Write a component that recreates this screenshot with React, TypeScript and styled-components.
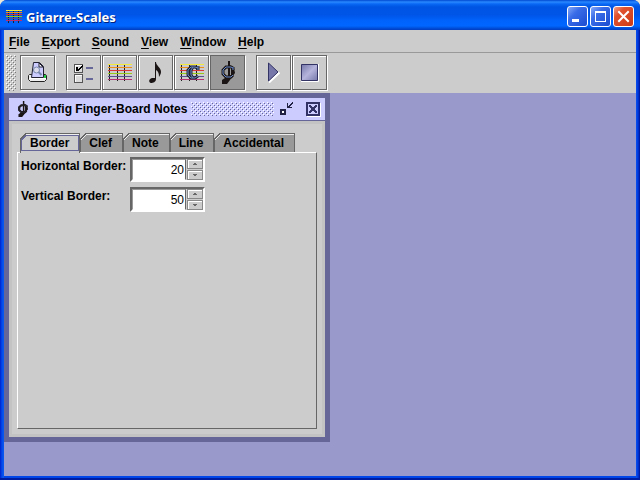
import React, { useState } from "react";
import styled, { createGlobalStyle, css } from "styled-components";

const Global = createGlobalStyle`
  * { box-sizing: border-box; }
  html, body, #root { height: 100%; margin: 0; }
  body { background: #ece9d8; overflow: hidden; }
  body, button, input { font-family: "Liberation Sans", Arial, sans-serif; font-size: 12px; color: #000; }
  button { padding: 0; border: 0; background: none; }
  svg { display: block; }
`;

const AppWindow = styled.div`
  display: flex;
  flex-direction: column;
  min-height: 100vh;
  padding: 0 4px 4px;
  border-radius: 7px 7px 0 0;
  background: linear-gradient(90deg, #001ec8 0, #0038e0 1px, #0855f0 3px, #0855f0 4px, #0046e8 4px,
    #0046e8 calc(100% - 4px), #0a50ee calc(100% - 4px), #0038dc calc(100% - 2px), #001090 100%);
  box-shadow: inset 0 -2px #001ca0;
`;

const TitleBar = styled.header`
  display: flex;
  align-items: center;
  height: 30px;
  margin: 0 -4px;
  padding: 3px 6px 0;
  gap: 4px;
  border-radius: 7px 7px 0 0;
  background: linear-gradient(180deg, #0048d0 0, #2a88ff 2px, #0868f4 4px, #0054e3 7px, #0055e8 15px,
    #0064fc 21px, #0066ff 26px, #0050dc 28px, #003cc0 30px);
`;

const WindowTitle = styled.h1`
  flex: 1;
  margin: 0;
  color: #fff;
  font: bold 13px/16px "Noto Sans", sans-serif;
  text-shadow: 1px 1px #00207c;
`;

const WindowButtons = styled.div`
  display: flex;
  gap: 2px;
`;

const WindowButton = styled.button<{ $close?: boolean }>`
  display: grid;
  place-items: center;
  width: 21px;
  height: 21px;
  border: 1px solid #fff;
  border-radius: 3px;
  background: ${(p) =>
    p.$close
      ? "linear-gradient(135deg, #f0a088 0, #e0512e 30%, #cc3a14 100%)"
      : "linear-gradient(135deg, #84a8f8 0, #3a6ce8 35%, #1c4cd0 100%)"};
`;

const MenuBar = styled.nav`
  display: flex;
  gap: 12px;
  height: 23px;
  padding: 0 5px;
  border-bottom: 1px solid #999;
  background: #ccc;
`;

const MenuItem = styled.button`
  font-weight: bold;
  line-height: 24px;
  &::first-letter { text-decoration: underline; text-underline-offset: 2px; }
`;

const ToolBar = styled.div`
  display: flex;
  height: 40px;
  padding: 2px 2px 0;
  background: #ccc;
`;

const dot = (color: string, place: string) =>
  `conic-gradient(from 270deg at 1px 1px, ${color} 90deg, transparent 0) ${place} / 4px 4px`;

const Grip = styled.div`
  width: 10px;
  height: 36px;
  margin-right: 4px;
  background: ${[
    dot("#fff", "0 0"),
    dot("#fff", "2px 2px"),
    dot("#777", "1px 1px"),
    dot("#777", "3px 3px"),
  ].join(", ")};
`;

const ToolGroup = styled.div`
  display: flex;
  gap: 1px;
  margin-right: 11px;
`;

const ToolButton = styled.button<{ $pressed?: boolean }>`
  display: grid;
  place-items: center;
  width: 35px;
  height: 35px;
  border: 1px solid #666;
  background: ${(p) => (p.$pressed ? "#999" : "#ccc")};
  box-shadow: ${(p) => (p.$pressed ? "1px 1px #fff" : "inset 1px 1px #fff, 1px 1px #fff")};
`;

const Desktop = styled.main`
  display: flex;
  flex: 1;
  align-items: flex-start;
  background: #99c;
`;

const Frame = styled.section`
  display: flex;
  flex-direction: column;
  width: 326px;
  border: 5px solid #669;
  background: #ccc;
`;

const FrameTitle = styled.header`
  display: flex;
  align-items: center;
  height: 23px;
  padding: 0 4px 0 8px;
  border-bottom: 1px solid #669;
  background: #ccf;
`;

const FrameName = styled.h2`
  margin: 0 4px 0 6px;
  font-size: 12px;
  line-height: 22px;
  white-space: nowrap;
`;

const Bumps = styled.div`
  flex: 1;
  height: 14px;
  margin-right: 5px;
  background: ${[
    dot("#fff", "0 0"),
    dot("#fff", "2px 2px"),
    dot("#669", "1px 1px"),
    dot("#669", "3px 3px"),
  ].join(", ")};
`;

const FrameButton = styled.button`
  width: 16px;
  height: 16px;
  & + & { margin-left: 10px; }
`;

const FrameBody = styled.div`
  padding: 12px 8px 8px;
  box-shadow: inset 0 0 0 3px #c3c3c3;
`;

const TabList = styled.div`
  display: flex;
  padding-left: 3px;
`;

const cut = (fill: string) => css`
  background:
    linear-gradient(135deg, #ccc 0 4px, #666 4px 5px, #eee 5px 6px, ${fill} 6px) 0 0 / 7px 7px no-repeat,
    linear-gradient(#666, #666) 6px 0 / 100% 1px no-repeat,
    linear-gradient(#666, #666) 0 6px / 1px 100% no-repeat,
    linear-gradient(#666, #666) 100% 0 / 1px 100% no-repeat,
    linear-gradient(#eee, #eee) 6px 1px / 100% 1px no-repeat,
    ${fill};
`;

const Tab = styled.button<{ $active: boolean }>`
  position: relative;
  height: ${(p) => (p.$active ? 20 : 19)}px;
  margin-bottom: ${(p) => (p.$active ? -1 : 0)}px;
  padding: 0 11px 0 10px;
  font-weight: bold;
  line-height: 20px;
  ${(p) => cut(p.$active ? "#ccc" : "#999")}
  & + & { padding: 0 11px 0 9px; }
`;

const FocusEdge = styled.svg`
  position: absolute;
  inset: 0;
  width: 100%;
  height: 100%;
`;

const Panel = styled.div`
  display: flex;
  flex-direction: column;
  gap: 5px;
  height: 277px;
  padding: 4px 4px 4px 3px;
  border: 1px solid;
  border-color: #fff #666 #666 #fff;
`;

const Field = styled.div`
  display: flex;
  align-items: flex-start;
  height: 25px;
`;

const FieldLabel = styled.label`
  width: 109px;
  font-weight: bold;
  line-height: 18px;
  white-space: nowrap;
`;

const Spinner = styled.div`
  display: flex;
  width: 75px;
  height: 25px;
  border: 2px solid;
  border-color: #666 #fff #fff #666;
  background: #ccc;
`;

const SpinnerInput = styled.input`
  flex: 1;
  min-width: 0;
  padding: 1px 1px 0 0;
  border: 1px solid;
  border-color: #999 #666 #fff #999;
  border-radius: 0;
  outline: 0;
  background: #fff;
  text-align: right;
`;

const Steps = styled.div`
  display: grid;
  grid-template-rows: 1fr 1fr;
  gap: 1px;
  width: 16px;
  margin-left: 1px;
`;

const Step = styled.button`
  display: grid;
  place-items: center;
  border: 1px solid #888;
  box-shadow: inset 1px 1px #fff;
  background: #ccc;
`;

const stringColors = ["#f4e838", "#f08c18", "#d83838", "#98c818", "#585090", "#b83070"];

function Strings({ clef }: { clef?: boolean }) {
  return (
    <svg width="25" height="21" viewBox="0 0 25 21" shapeRendering="crispEdges">
      <path d="M2.500 2v17M10.500 2v17M17.500 2v17" stroke="#222" />
      {stringColors.map((color, i) => (
        <rect key={color} x="1" y={2 + i * 3} width="24" height="1" fill={color} />
      ))}
      {clef && <ClefLetter />}
    </svg>
  );
}

function ClefLetter() {
  const shape = "M19 4v4M19 6L16 5H12L9 8V13L12 16H16L19 14M14 5L12 8V13L14 16";
  return (
    <g fill="none" shapeRendering="auto">
      <path d={shape} stroke="#222230" strokeWidth="3" />
      <path d={shape} stroke="#6688c4" strokeWidth="1" />
    </g>
  );
}

function AppIcon() {
  return (
    <svg width="16" height="15" viewBox="0 0 16 15" shapeRendering="crispEdges">
      <path d="M2.500 1v13M7.500 1v13M12.500 1v13" stroke="#222" />
      {stringColors.map((color, i) => (
        <rect key={color} x="0" y={1 + i * 2} width="16" height="1" fill={color} />
      ))}
    </svg>
  );
}

function PrintIcon() {
  return (
    <svg width="21" height="21" viewBox="0 0 21 21">
      <path d="M2.500 12.500h16l1 1v4l-2 2h-14l-2-2v-4z" fill="#eee" stroke="#222" />
      <path d="M4.500 15.500L6.500 .5h6l4 4v11z" fill="#ccf" stroke="#223" />
      <path d="M12 1v4h4z" fill="#fff" stroke="#223" />
      <path d="M2 16.500h17" stroke="#fff" />
      <circle cx="9.500" cy="8" r="3" fill="#dde" stroke="#7788aa" />
      <path d="M11.500 10l3 3" stroke="#7788aa" strokeWidth="2" />
      <path d="M17 13h2v3h-2z" fill="#2c4" />
    </svg>
  );
}

function OptionsIcon() {
  return (
    <svg width="21" height="21" viewBox="0 0 21 21" shapeRendering="crispEdges">
      <path d="M1.500 2.500h8v8h-8zM1.500 12.500h8v8h-8z" fill="#ddd" stroke="#555" />
      <path d="M2.500 10V3.500H9M2.500 20v-6.500H9" fill="none" stroke="#fff" />
      <path d="M3 5h2v2h1V6h1V5h1V4h1V3h1v2H9v1H8v1H7v1H6v1H3z" fill="#000" />
      <path d="M13 5h7v2h-7zM13 16h7v2h-7z" fill="#669" />
    </svg>
  );
}

function NoteIcon() {
  return (
    <svg width="13" height="21" viewBox="0 0 13 21">
      <path d="M6 0h1c0 4 5 5 5 10 0 2-1 3-2 5 0-4-1-6-3-7v9c0 3-3 4-5 4-3-1-2-4 1-5h3z" fill="#1a1414" />
    </svg>
  );
}

function NoteClefIcon({ small }: { small?: boolean }) {
  return (
    <svg width={small ? 11 : 15} height={small ? 16 : 23} viewBox="0 0 15 23" preserveAspectRatio="none">
      <path d="M8 0h2v4l4 3 1 5-3 4-2 3-3 4H2l0-4 3-2h3z" fill="#1a1414" />
      <path d="M5 8h2v6H5zM10 7h1v7h-1z" fill={small ? "#ccf" : "#999"} />
      <path d="M13 6v3M13 7L11 6H6L3 9V13L6 16H11L13 14" fill="none" stroke="#1a1414" strokeWidth="3" />
      <path d="M13 6v3M13 7L11 6H6L3 9V13L6 16H11L13 14" fill="none" stroke={small ? "#334" : "#6688cc"} />
    </svg>
  );
}

function PlayIcon() {
  return (
    <svg width="13" height="21" viewBox="0 0 13 21">
      <path d="M2 20.500L12.500 10.500" stroke="#fff" strokeWidth="2" />
      <path d="M1.500 1v18L11 10z" fill="#7777aa" stroke="#336" />
    </svg>
  );
}

function StopIcon() {
  return (
    <svg width="19" height="19" viewBox="0 0 19 19">
      <defs>
        <linearGradient id="stop" x2="1" y2="1">
          <stop stopColor="#7777aa" />
          <stop offset=".5" stopColor="#b4b4dc" />
          <stop offset="1" stopColor="#7777aa" />
        </linearGradient>
      </defs>
      <path d="M1 18.500h17.500V1" fill="none" stroke="#fff" />
      <path d="M1.500 1.500h16v16h-16z" fill="url(#stop)" stroke="#336" />
    </svg>
  );
}

function SpinField({ id, label, initial }: { id: string; label: string; initial: number }) {
  const [value, setValue] = useState(initial);
  return (
    <Field>
      <FieldLabel htmlFor={id}>{label}</FieldLabel>
      <Spinner>
        <SpinnerInput id={id} value={value} onChange={(e) => setValue(Number(e.target.value) || 0)} />
        <Steps>
          <Step aria-label={`Increase ${label}`} onClick={() => setValue(value + 1)}>
            <svg width="4" height="2" shapeRendering="crispEdges"><path d="M1 0h2v1h1v1H0V1h1z" fill="#666" /></svg>
          </Step>
          <Step aria-label={`Decrease ${label}`} onClick={() => setValue(value - 1)}>
            <svg width="4" height="2" shapeRendering="crispEdges"><path d="M0 0h4v1H3v1H1V1H0z" fill="#666" /></svg>
          </Step>
        </Steps>
      </Spinner>
    </Field>
  );
}

const menus = ["File", "Export", "Sound", "View", "Window", "Help"];
const tabs = ["Border", "Clef", "Note", "Line", "Accidental"];

export default function App() {
  const [active, setActive] = useState("Border");
  return (
    <>
      <Global />
      <AppWindow>
        <TitleBar>
          <AppIcon />
          <WindowTitle>Gitarre-Scales</WindowTitle>
          <WindowButtons>
            <WindowButton aria-label="Minimize">
              <svg width="13" height="13"><path d="M1 9h7v3H1z" fill="#fff" /></svg>
            </WindowButton>
            <WindowButton aria-label="Maximize">
              <svg width="13" height="13" shapeRendering="crispEdges"><path d="M1.500 1.500h10v10h-10zM1 2.500h11" fill="none" stroke="#fff" /></svg>
            </WindowButton>
            <WindowButton $close aria-label="Close">
              <svg width="13" height="13"><path d="M2 2l9 9M11 2l-9 9" stroke="#fff" strokeWidth="2" strokeLinecap="square" /></svg>
            </WindowButton>
          </WindowButtons>
        </TitleBar>
        <MenuBar>
          {menus.map((name) => <MenuItem key={name}>{name}</MenuItem>)}
        </MenuBar>
        <ToolBar>
          <Grip />
          <ToolGroup>
            <ToolButton aria-label="Print preview"><PrintIcon /></ToolButton>
          </ToolGroup>
          <ToolGroup>
            <ToolButton aria-label="Options"><OptionsIcon /></ToolButton>
            <ToolButton aria-label="Finger-board"><Strings /></ToolButton>
            <ToolButton aria-label="Notes"><NoteIcon /></ToolButton>
            <ToolButton aria-label="Configure finger-board"><Strings clef /></ToolButton>
            <ToolButton $pressed aria-label="Configure notes"><NoteClefIcon /></ToolButton>
          </ToolGroup>
          <ToolGroup>
            <ToolButton aria-label="Play"><PlayIcon /></ToolButton>
            <ToolButton aria-label="Stop"><StopIcon /></ToolButton>
          </ToolGroup>
        </ToolBar>
        <Desktop>
          <Frame>
            <FrameTitle>
              <NoteClefIcon small />
              <FrameName>Config Finger-Board Notes</FrameName>
              <Bumps />
              <FrameButton aria-label="Restore">
                <svg width="16" height="16" shapeRendering="crispEdges">
                  <path d="M1 8h6v6H1zM3 10v2h2v-2z" fill="#224" fillRule="evenodd" />
                  <path d="M3 10h2v2H3z" fill="#fff" />
                  <path d="M8 2h1v3h1V4h1V3h1V2h1V1h1v2h-1v1h-1v1h-1v1h2v1H8z" fill="#224" />
                </svg>
              </FrameButton>
              <FrameButton aria-label="Close frame">
                <svg width="16" height="16" shapeRendering="crispEdges">
                  <path d="M2 15.500h13.500V2" fill="none" stroke="#fff" />
                  <path d="M2 2h12v12H2z" fill="#ccf" stroke="#336" strokeWidth="2" />
                  <path d="M4 4h2v1h1v1h2V5h1V4h2v2h-1v1h-1v2h1v1h1v2h-2v-1H9v-1H7v1H6v1H4v-2h1V9h1V7H5V6H4z" fill="#336" />
                </svg>
              </FrameButton>
            </FrameTitle>
            <FrameBody>
              <TabList role="tablist">
                {tabs.map((name) => (
                  <Tab key={name} role="tab" aria-selected={name === active} $active={name === active} onClick={() => setActive(name)}>
                    {name === active && (
                      <FocusEdge viewBox="0 0 60 20" preserveAspectRatio="none" shapeRendering="crispEdges">
                        <path d="M1.500 18V7L6 2.500h52.500v15h-57" fill="none" stroke="#669" />
                      </FocusEdge>
                    )}
                    {name}
                  </Tab>
                ))}
              </TabList>
              <Panel role="tabpanel">
                <SpinField id="horizontal" label="Horizontal Border:" initial={20} />
                <SpinField id="vertical" label="Vertical Border:" initial={50} />
              </Panel>
            </FrameBody>
          </Frame>
        </Desktop>
      </AppWindow>
    </>
  );
}
